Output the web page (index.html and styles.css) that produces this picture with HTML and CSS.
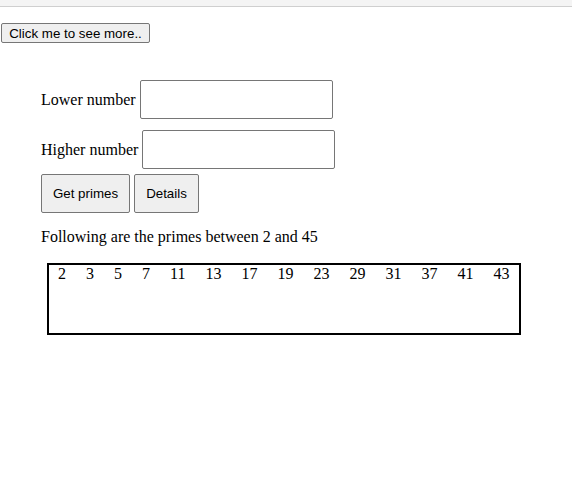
FILE: index.html
```html
<!DOCTYPE html>
<html>
<head>
<meta charset="utf-8">
<link rel="stylesheet" href="styles.css">
</head>
<body>
<div class="topbar"></div>
<button class="more">Click me to see more..</button>
<div class="form">
  <div class="row r1">
    <label class="lbl">Lower number</label>
    <input class="num" type="text">
  </div>
  <div class="row r2">
    <label class="lbl">Higher number</label>
    <input class="num" type="text">
  </div>
  <div class="btns">
    <button class="btn b1">Get primes</button>
    <button class="btn b2">Details</button>
  </div>
  <p class="info">Following are the primes between 2 and 45</p>
  <div class="box">
    <span>2</span><span>3</span><span>5</span><span>7</span><span>11</span><span>13</span><span>17</span><span>19</span><span>23</span><span>29</span><span>31</span><span>37</span><span>41</span><span>43</span>
  </div>
</div>
</body>
</html>
```
FILE: styles.css
```css
html, body {
  margin: 0;
  padding: 0;
  background: #fff;
}
body {
  font-family: "Liberation Serif", "Times New Roman", serif;
  font-size: 16px;
  color: #000;
}
.topbar {
  height: 6px;
  background: #f4f4f4;
  border-bottom: 1px solid #cfcfcf;
}
.more {
  display: block;
  margin: 16px 0 0 1px;
  height: 20px;
  width: 149px;
  padding: 0;
  font-family: "Liberation Sans", Arial, sans-serif;
  font-size: 13.33px;
  background: #efefef;
  border: 1px solid #767676;
  border-radius: 2px;
  color: #000;
}
.form {
  padding-left: 41px;
}
.row {
  display: flex;
  align-items: center;
  gap: 4px;
}
.r1 {
  margin-top: 37px;
}
.r2 {
  margin-top: 11px;
}
.num {
  width: 193px;
  height: 39px;
  box-sizing: border-box;
  border: 1px solid #767676;
  border-radius: 2px;
  padding: 0;
  margin: 0;
}
.btns {
  display: flex;
  gap: 4px;
  margin-top: 5px;
}
.btn {
  height: 39px;
  box-sizing: border-box;
  padding: 0;
  font-family: "Liberation Sans", Arial, sans-serif;
  font-size: 13.33px;
  background: #efefef;
  border: 1px solid #767676;
  border-radius: 2px;
  color: #000;
}
.b1 { width: 89px; }
.b2 { width: 65px; }
.info {
  margin: 15px 0 0 0;
  line-height: 18px;
}
.box {
  margin: 17px 0 0 6px;
  width: 474px;
  height: 72px;
  box-sizing: border-box;
  border: 2px solid #000;
  display: flex;
  align-items: flex-start;
  padding-left: 9px;
  line-height: 18px;
}
.box span {
  padding: 0 10px 0 0;
  margin-right: 10px;
}
```
